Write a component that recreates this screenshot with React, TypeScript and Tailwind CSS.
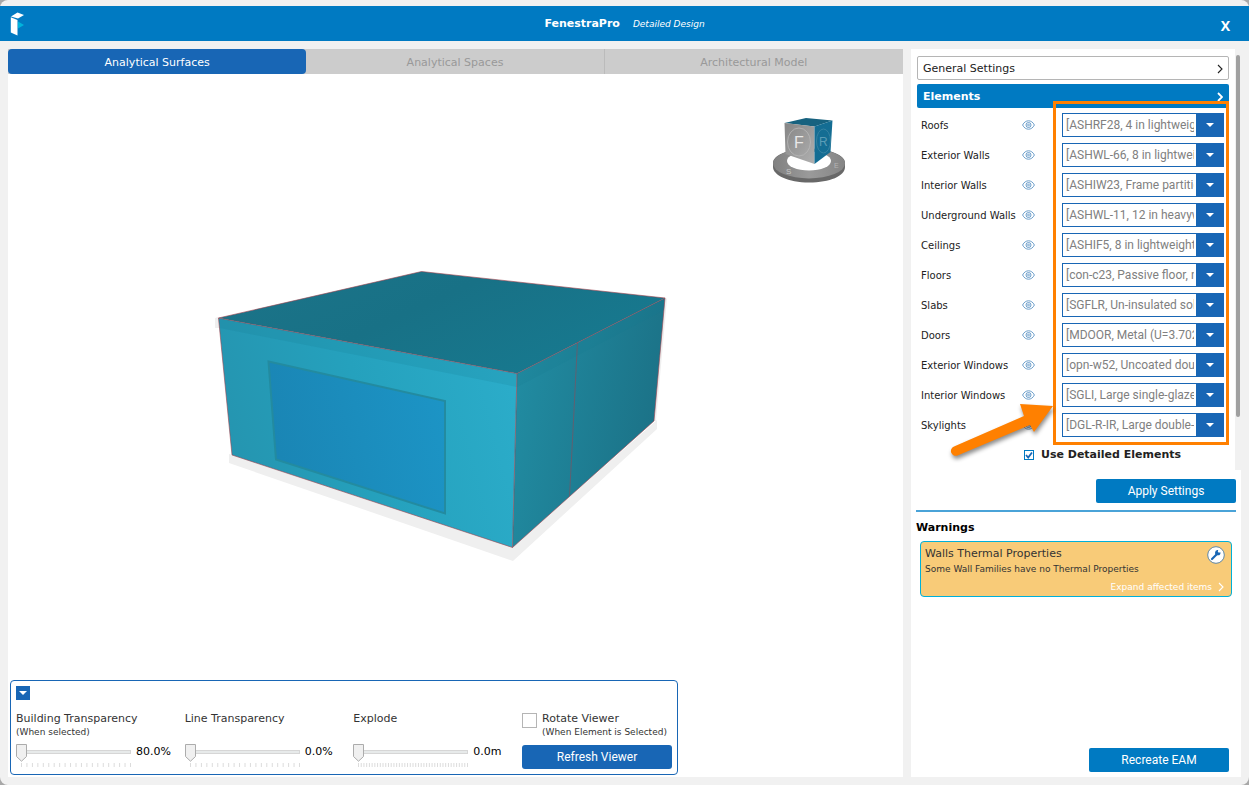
import React, { useState } from 'react';

interface ElementRow {
  id: string;
  label: string;
  value: string;
}

interface SliderProps {
  id: string;
  label: string;
  note?: string;
  display: string;
  ticks: number;
}

const elementRows: ElementRow[] = [
  { id: 'roofs', label: 'Roofs', value: '[ASHRF28, 4 in lightweight concrete' },
  { id: 'exterior-walls', label: 'Exterior Walls', value: '[ASHWL-66, 8 in lightweight concrete' },
  { id: 'interior-walls', label: 'Interior Walls', value: '[ASHIW23, Frame partition' },
  { id: 'underground-walls', label: 'Underground Walls', value: '[ASHWL-11, 12 in heavyweight concrete' },
  { id: 'ceilings', label: 'Ceilings', value: '[ASHIF5, 8 in lightweight concrete' },
  { id: 'floors', label: 'Floors', value: '[con-c23, Passive floor, no insulation' },
  { id: 'slabs', label: 'Slabs', value: '[SGFLR, Un-insulated solid-ground floor' },
  { id: 'doors', label: 'Doors', value: '[MDOOR, Metal (U=3.7021)' },
  { id: 'exterior-windows', label: 'Exterior Windows', value: '[opn-w52, Uncoated double glazing' },
  { id: 'interior-windows', label: 'Interior Windows', value: '[SGLI, Large single-glazed windows' },
  { id: 'skylights', label: 'Skylights', value: '[DGL-R-IR, Large double-glazed windows' },
];

const tabs = ['Analytical Surfaces', 'Analytical Spaces', 'Architectural Model'];

const sliders: SliderProps[] = [
  { id: 'building', label: 'Building Transparency', note: '(When selected)', display: '80.0%', ticks: 21 },
  { id: 'line', label: 'Line Transparency', display: '0.0%', ticks: 21 },
  { id: 'explode', label: 'Explode', display: '0.0m', ticks: 41 },
];

const Logo: React.FC = () => (
  <svg width="16" height="24" viewBox="0 0 16 24" aria-hidden="true">
    <path d="M1 4.500 7.500 .5 14 3 8 6.400Z" fill="#fff" />
    <path d="M.8 5.200 7.500 8V23.500L.8 20.500Z" fill="#fff" />
    <path d="M8 9.500 14 13 8 16.500Z" fill="#00b4dc" />
  </svg>
);

const EyeIcon: React.FC = () => (
  <svg width="13" height="10" viewBox="0 0 13 10" fill="none" stroke="#5b93c4" aria-hidden="true">
    <path d="M.6 5C2 2.2 4.1.8 6.5.8S11 2.2 12.4 5C11 7.8 8.900 9.200 6.500 9.200S2 7.800.600 5Z" strokeWidth=".9" />
    <circle cx="6.500" cy="5" r="2.500" strokeWidth=".9" />
    <circle cx="6.500" cy="5" r=".9" strokeWidth=".8" />
  </svg>
);

const Chevron: React.FC<{ bold?: boolean }> = ({ bold }) => (
  <svg width="6" height="10" viewBox="0 0 6 10" fill="none" stroke="currentColor" strokeWidth={bold ? 1.8 : 1.1} aria-hidden="true">
    <path d="M1 1 5 5 1 9" />
  </svg>
);

const Caret: React.FC = () => (
  <svg width="8" height="4" viewBox="0 0 8 4" fill="#fff" aria-hidden="true">
    <path d="M0 0H8L4 4Z" />
  </svg>
);

// Building model and view cube
const Scene: React.FC = () => (
  <svg className="min-h-0 w-full flex-1" viewBox="8 74 895 606" role="img" aria-label="Analytical surfaces model">
    <defs>
      <linearGradient id="front" x1="0" y1=".6" x2="1" y2=".4">
        <stop offset="0" stopColor="#2594af" />
        <stop offset=".5" stopColor="#25a1bd" />
        <stop offset="1" stopColor="#2bacc9" />
      </linearGradient>
      <linearGradient id="side" x1="0" y1=".3" x2="1" y2=".6">
        <stop offset="0" stopColor="#218ca2" />
        <stop offset="1" stopColor="#1b7085" />
      </linearGradient>
      <linearGradient id="roof" x1="0" y1="0" x2="1" y2=".5">
        <stop offset="0" stopColor="#1c7489" />
        <stop offset=".5" stopColor="#187186" />
        <stop offset="1" stopColor="#17798f" />
      </linearGradient>
      <linearGradient id="glass" x1="0" y1=".6" x2="1" y2=".4">
        <stop offset="0" stopColor="#1a85b4" />
        <stop offset="1" stopColor="#1c94c5" />
      </linearGradient>
      <linearGradient id="cubeFront" x1="0" y1="0" x2="1" y2="1">
        <stop offset="0" stopColor="#858585" />
        <stop offset="1" stopColor="#b0b0b0" />
      </linearGradient>
      <linearGradient id="ring" x1="0" y1="0" x2="1" y2="0">
        <stop offset="0" stopColor="#808080" />
        <stop offset=".5" stopColor="#9a9a9a" />
        <stop offset="1" stopColor="#858585" />
      </linearGradient>
    </defs>

    <path d="M229 454V463L513 561 657 429V420L513 547Z" fill="#efefef" />
    <path d="M215 318 218 317 220 328H215ZM665 297 667 299 656 421 654 421Z" fill="#efefef" />
    <path d="M218.500 318 421.500 271.500 665 298 517 373.500Z" fill="url(#roof)" />
    <path d="M218.500 318 517 373.500 512.500 547.500 232 455Z" fill="url(#front)" />
    <path d="M517 373.500 665 298 654 421 512.500 547.500Z" fill="url(#side)" />
    <path d="M218.500 318 517 373.500V387L219.500 328ZM517 373.500 665 298 664 310 517 387Z" fill="#157a92" fillOpacity=".18" />
    <path d="M268.500 361.500 445 401V513.500L276 459.500Z" fill="url(#glass)" stroke="#238ba0" strokeWidth="2" />
    <path d="M218.500 318 421.500 271.500 665 298 517 373.500ZL232 455 512.500 547.500 654 421 665 298M517 373.500 512.500 547.500" fill="none" stroke="#a0404c" strokeWidth=".6" />
    <path d="M577.500 342 573 430 569.500 496" fill="none" stroke="#a0404c" strokeWidth=".5" />

    <path d="M773 163C773 155 788 149 809 149S845 155 845 163V167C845 176 830 182.500 809 182.500S773 175 773 167Z" fill="#686868" />
    <ellipse cx="809" cy="163.500" rx="36" ry="15" fill="url(#ring)" />
    <ellipse cx="809" cy="161" rx="22" ry="9.500" fill="#fff" />
    <path d="M784.500 123 806 118 832.500 120.500 814.500 126.500Z" fill="#17627f" />
    <path d="M784.500 123 814.500 126.500V164L785.500 154Z" fill="url(#cubeFront)" />
    <path d="M814.500 126.500 832.500 120.500 830.500 152 814.500 164Z" fill="#146d93" />
    <ellipse cx="799" cy="142" rx="11.500" ry="14" fill="none" stroke="#b8b8b8" strokeWidth=".8" />
    <ellipse cx="823.500" cy="141" rx="7" ry="12" fill="none" stroke="#3d87a5" strokeWidth=".8" />
    <text x="794" y="148" fontSize="16" fill="#e8e8e8" className="font-['Liberation_Sans']">F</text>
    <text x="819" y="146" fontSize="12" fill="#5b9cb6" className="font-['Liberation_Sans']">R</text>
    <text x="786" y="174" fontSize="8" fill="#c8c8c8" className="font-['Liberation_Sans']">S</text>
    <text x="834" y="168" fontSize="7" fill="#b5b5b5" className="font-['Liberation_Sans']">E</text>
  </svg>
);

const Slider: React.FC<SliderProps> = ({ id, label, note, display, ticks }) => {
  const [value, setValue] = useState(0);

  return (
    <div className="flex flex-col">
      <label htmlFor={id} className="h-7 text-[11px] leading-[14px]">
        {label}
        {note && <span className="block text-[9px] leading-3">{note}</span>}
      </label>
      <div className="mt-1 flex gap-[5px]">
        <div className="relative h-[26px] w-[115px]">
          <input
            id={id}
            type="range"
            min="0"
            max="100"
            value={value}
            onChange={e => setValue(Number(e.target.value))}
            className="mt-[6px] block h-1 w-full appearance-none border border-[#d6d6d6] bg-[#e7eaea] [&::-webkit-slider-thumb]:h-4 [&::-webkit-slider-thumb]:w-[11px] [&::-webkit-slider-thumb]:appearance-none [&::-webkit-slider-thumb]:opacity-0"
          />
          <svg
            className="pointer-events-none absolute top-0"
            style={{ left: `${(value / 100) * 104}px` }}
            width="11"
            height="18"
            viewBox="0 0 11 18"
            aria-hidden="true"
          >
            <path d="M.5.500H10.500V12.500L5.500 17.200.500 12.500Z" fill="#f0f0f0" stroke="#acacac" />
          </svg>
          <svg className="mt-[9px] block" width="115" height="4" viewBox="0 0 115 4" stroke="#dcdcdc" aria-hidden="true">
            {Array.from({ length: ticks }, (_, i) => (
              <path key={i} d={`M${5.500 + (i * 109) / (ticks - 1)} 0V4`} />
            ))}
          </svg>
        </div>
        <output htmlFor={id} className="text-[11px] leading-4 text-black">{display}</output>
      </div>
    </div>
  );
};

const ViewerControls: React.FC = () => (
  <section className="m-0.5 mt-0 w-[668px] max-w-full rounded border border-[#1866b5] p-[5px] pb-1 text-[#333]">
    <button aria-label="Collapse viewer controls" className="flex h-[14px] w-[14px] items-center justify-center bg-[#1866b5]">
      <Caret />
    </button>
    <div className="mt-3 grid grid-cols-[1fr_1fr_1fr_150px]">
      {sliders.map(slider => (
        <Slider key={slider.id} {...slider} />
      ))}
      <div className="flex flex-col">
        <label className="flex h-7 gap-[5px] text-[11px] leading-[14px] whitespace-nowrap">
          <input type="checkbox" className="mt-px h-[15px] w-[15px] shrink-0 appearance-none border border-[#b5b5b5] bg-white" />
          <span>
            Rotate Viewer
            <span className="block text-[9px] leading-3">(When Element is Selected)</span>
          </span>
        </label>
        <button className="mt-[5px] h-6 rounded-[3px] bg-[#1866b5] font-[Roboto,sans-serif] text-xs text-white">
          Refresh Viewer
        </button>
      </div>
    </div>
  </section>
);

const ElementSelect: React.FC<{ row: ElementRow }> = ({ row }) => (
  <div className="flex h-[30px] items-center pr-[5px] pl-1">
    <label htmlFor={row.id} className="flex-1 text-[10px] whitespace-nowrap text-[#222]">{row.label}</label>
    <button aria-label={`Show ${row.label}`} className="mr-[27px]">
      <EyeIcon />
    </button>
    <div className="relative h-6 w-[162px]">
      <select
        id={row.id}
        className="block h-full w-full appearance-none border border-[#1866b5] bg-white pr-[29px] pl-[3px] font-[Roboto,sans-serif] text-xs text-[#808080]"
      >
        <option>{row.value}</option>
      </select>
      <span className="pointer-events-none absolute inset-y-0 right-0 flex w-[28px] items-center justify-center bg-[#1866b5]">
        <Caret />
      </span>
    </div>
  </div>
);

// Orange frame and arrow drawn over the construction drop-downs
const Callout: React.FC = () => (
  <>
    <div className="pointer-events-none absolute -top-[9px] right-0 -bottom-[5px] w-[176px] border-3 border-[#ff8000]" />
    <svg className="pointer-events-none absolute right-[172px] -bottom-[26px] drop-shadow-[1px_3px_2px_rgba(0,0,0,0.45)]" width="112" height="66" viewBox="945 400 112 66" aria-hidden="true">
      <path d="M954 446.500 1024 416 1020 404 1053 406 1034 432 1030 425 957.500 455.500A4.800 4.800 0 0 1 954 446.500Z" fill="#ff8000" />
    </svg>
  </>
);

const SettingsPanel: React.FC = () => (
  <aside className="flex w-[330px] shrink-0 flex-col bg-white">
    <div className="flex justify-between pl-[6px]">
      <div className="w-[312px] pt-[7px]">
        <button className="flex h-6 w-full items-center justify-between rounded-[2px] border border-[#b5b5b5] px-[5px] pt-[2px] text-[11px] text-[#222]">
          General Settings
          <Chevron />
        </button>
        <button className="mt-1 flex h-6 w-full items-center justify-between rounded-[2px] bg-[#007ac2] px-[6px] pt-[2px] text-[11px] font-bold text-white">
          Elements
          <Chevron bold />
        </button>
        <div className="relative mt-[2px]">
          {elementRows.map(row => (
            <ElementSelect key={row.id} row={row} />
          ))}
          <Callout />
        </div>
        <label className="flex h-[30px] items-center gap-[7px] pl-[107px] text-[11px] font-bold text-[#222]">
          <span className="relative h-[10px] w-[10px]">
            <input type="checkbox" defaultChecked className="peer block h-full w-full appearance-none border border-[#007ac2] bg-white" />
            <svg className="pointer-events-none absolute inset-0 hidden peer-checked:block" width="10" height="10" viewBox="0 0 10 10" fill="none" stroke="#1866b5" strokeWidth="1.800" aria-hidden="true">
              <path d="M2 5 4.200 7.500 8 2.500" />
            </svg>
          </span>
          Use Detailed Elements
        </label>
      </div>
      <div className="w-[6px] bg-[#f1f1f1] pt-[6px]">
        <div className="mx-auto h-[362px] w-1 rounded-full bg-[#a0a0a0]" />
      </div>
    </div>

    <div className="flex flex-1 flex-col px-[5px]">
      <button className="mt-[9px] h-6 w-[140px] self-end rounded-[2px] bg-[#007ac2] font-[Roboto,sans-serif] text-xs text-white">
        Apply Settings
      </button>
      <hr className="mt-[7px] border-t-2 border-[#4aa3d8]" />
      <h2 className="mt-2 text-[11px] leading-4 font-bold text-black">Warnings</h2>
      <article className="mx-1 mt-[5px] flex h-14 flex-col rounded border border-[#00b0d8] bg-[#f8cb78] px-1 pt-1 text-[#333]">
        <div className="flex justify-between">
          <div>
            <h3 className="text-[11px] leading-[15px]">Walls Thermal Properties</h3>
            <p className="text-[9px] leading-4">Some Wall Families have no Thermal Properties</p>
          </div>
          <button aria-label="Fix thermal properties" className="mr-[2px] h-[18px] w-[18px]">
            <svg width="18" height="18" viewBox="0 0 18 18" aria-hidden="true">
              <circle cx="9" cy="9" r="8.300" fill="#fff" stroke="#5f87a6" />
              <path d="M5 13 10.500 7.500" stroke="#1866b5" strokeWidth="2.200" strokeLinecap="round" />
              <path d="M13.400 6.200A2.700 2.700 0 1 1 11.200 4L10.800 5.800 11.800 6.700Z" fill="#1866b5" />
            </svg>
          </button>
        </div>
        <button className="flex items-center gap-[6px] self-end pr-[3px] text-[9px] leading-5 text-white">
          Expand affected items
          <Chevron />
        </button>
      </article>
      <button className="mt-auto mr-[7px] mb-[5px] h-6 w-[140px] self-end rounded-[2px] bg-[#007ac2] font-[Roboto,sans-serif] text-xs text-white">
        Recreate EAM
      </button>
    </div>
  </aside>
);

const App: React.FC = () => {
  const [activeTab, setActiveTab] = useState(tabs[0]);

  return (
    <div className="flex h-screen min-h-[640px] flex-col bg-[#a8a8a8] font-['DejaVu_Sans',sans-serif]">
      <div className="flex min-h-0 flex-1 flex-col rounded-lg bg-[#f1f1f1] pt-[6px]">
        <header className="grid h-[35px] shrink-0 grid-cols-[1fr_auto_1fr] items-center bg-[#007ac2] px-[10px] text-white">
          <Logo />
          <div className="flex items-center gap-[13px] pt-[2px]">
            <h1 className="text-[11px] font-bold">FenestraPro</h1>
            <span className="text-[9px] italic">Detailed Design</span>
          </div>
          <button aria-label="Close" className="justify-self-end pt-1 pr-[9px] font-['Open_Sans',sans-serif] text-sm leading-4 font-bold">X</button>
        </header>

        <main className="flex min-h-0 flex-1 gap-2 p-2">
          <div className="flex min-w-0 flex-1 flex-col bg-white">
            <nav className="grid h-[25px] shrink-0 grid-cols-3 bg-[#ccc]">
              {tabs.map(tab => (
                <button
                  key={tab}
                  onClick={() => setActiveTab(tab)}
                  className={`pt-[3px] text-[11px] ${
                    tab === activeTab
                      ? 'rounded bg-[#1866b5] text-white'
                      : 'border-r border-[#bbb] text-[#999] last:border-r-0'
                  }`}
                >
                  {tab}
                </button>
              ))}
            </nav>
            <Scene />
            <ViewerControls />
          </div>
          <SettingsPanel />
        </main>
      </div>
    </div>
  );
};

export default App;
